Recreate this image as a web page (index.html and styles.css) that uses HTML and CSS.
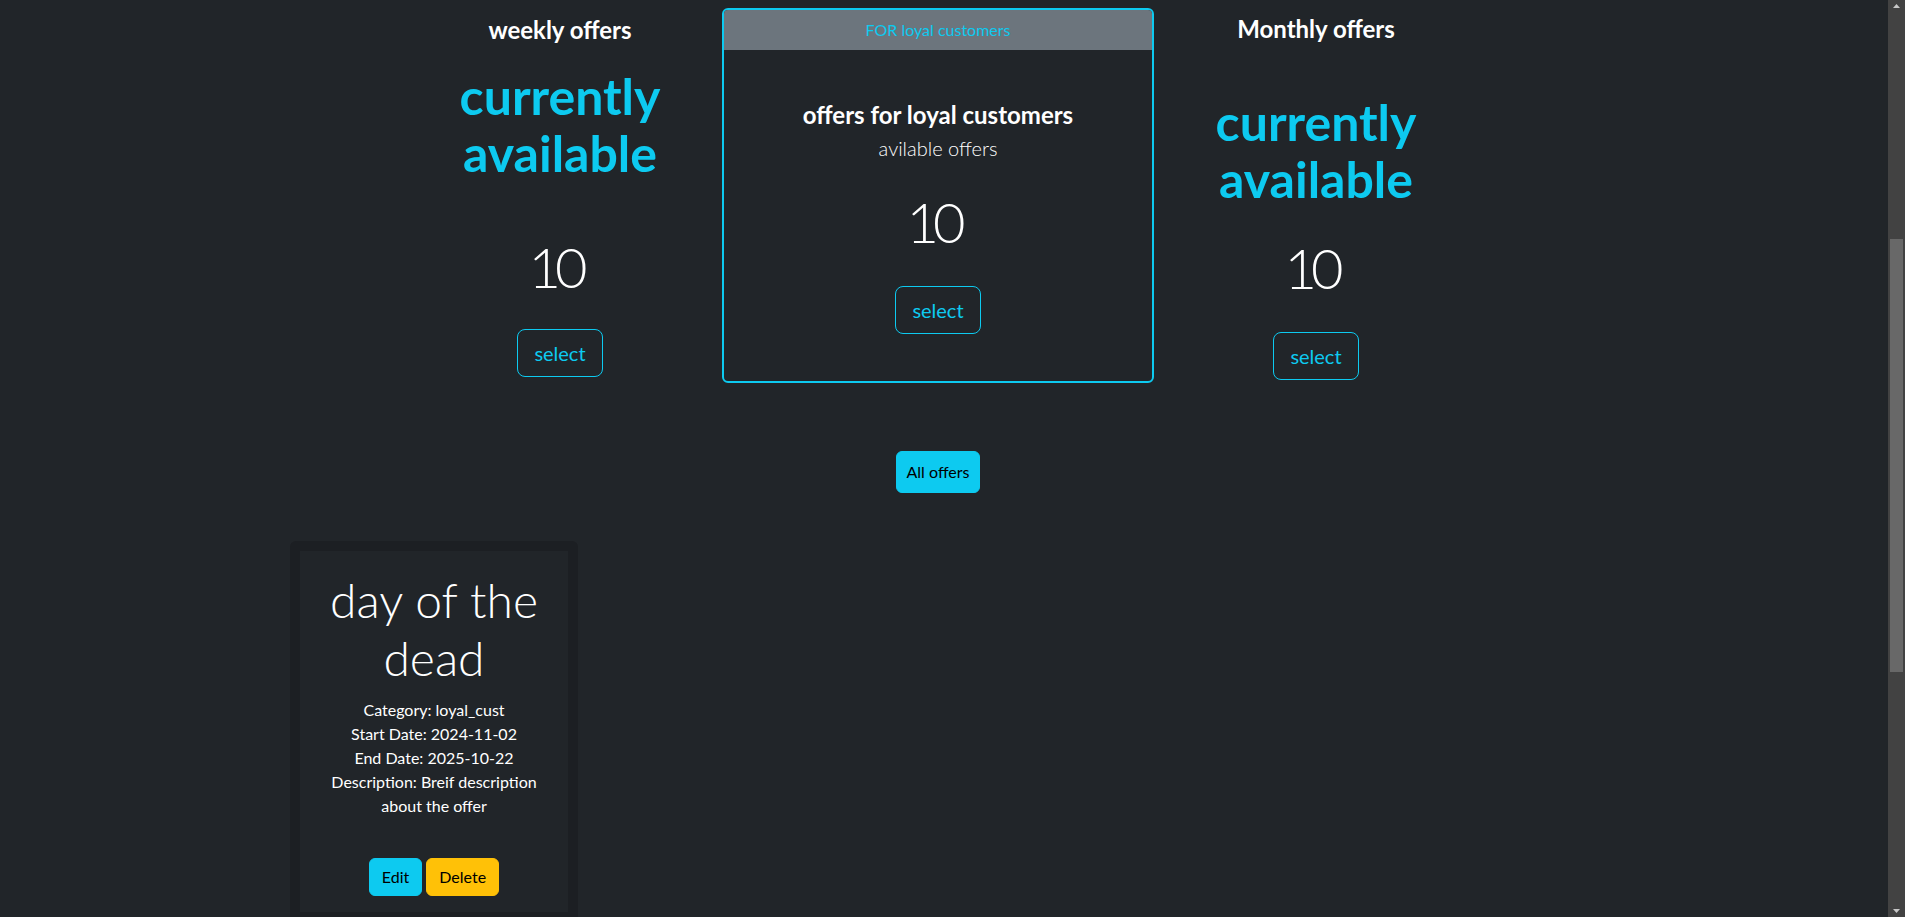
FILE: index.html
```html
<!DOCTYPE html>
<html lang="en">
<head>
<meta charset="utf-8">
<title>Offers</title>
<link rel="stylesheet" href="styles.css">
</head>
<body>
<div class="page">
  <div class="top-row">
    <div class="col col-weekly">
      <h4 class="col-title">weekly offers</h4>
      <h1 class="avail">currently<br>available</h1>
      <div class="count">10</div>
      <button class="btn-select">select</button>
    </div>
    <div class="col col-middle">
      <div class="loyal-card">
        <div class="loyal-header">FOR loyal customers</div>
        <div class="loyal-body">
          <h5 class="loyal-title">offers for loyal customers</h5>
          <p class="lead">avilable offers</p>
          <div class="count count-mid">10</div>
          <button class="btn-select btn-select-mid">select</button>
        </div>
      </div>
    </div>
    <div class="col col-monthly">
      <h4 class="col-title">Monthly offers</h4>
      <h1 class="avail">currently<br>available</h1>
      <div class="count">10</div>
      <button class="btn-select">select</button>
    </div>
  </div>

  <div class="all-wrap">
    <button class="btn-all">All offers</button>
  </div>

  <div class="offer-list">
    <div class="offer-card">
      <div class="offer-body">
        <h2 class="offer-title">day of the dead</h2>
        <div class="offer-info">
          <div>Category: loyal_cust</div>
          <div>Start Date: 2024-11-02</div>
          <div>End Date: 2025-10-22</div>
          <div>Description: Breif description about the offer</div>
        </div>
        <div class="offer-actions">
          <button class="btn-edit">Edit</button>
          <button class="btn-delete">Delete</button>
        </div>
      </div>
    </div>
  </div>
</div>

<div class="scrollbar">
  <svg class="sb-arrow sb-up" width="17" height="17" viewBox="0 0 17 17"><polygon points="5,8 12,8 8.5,4" fill="#c8c8c8"/></svg>
  <div class="sb-thumb"></div>
  <svg class="sb-arrow sb-down" width="17" height="17" viewBox="0 0 17 17"><polygon points="5,9 12,9 8.5,13" fill="#c8c8c8"/></svg>
</div>
</body>
</html>
```

FILE: styles.css
```css
* { box-sizing: border-box; }

html, body {
  margin: 0;
  padding: 0;
  background: #212529;
  height: 917px;
  overflow: hidden;
}

body {
  font-family: Lato, "Liberation Sans", sans-serif;
  color: #dee2e6;
  font-size: 16px;
  line-height: 24px;
}

.page {
  width: 1888px;
}

h1, h2, h4, h5, p { margin: 0; }

.top-row {
  display: flex;
  align-items: flex-start;
  margin-left: 371px;
}

.col {
  width: 378px;
  text-align: center;
  display: flex;
  flex-direction: column;
  align-items: center;
}

.col-title {
  font-size: 24px;
  line-height: 29px;
  font-weight: 700;
  color: #fff;
}

.col-weekly .col-title { margin-top: 15px; }
.col-monthly .col-title { margin-top: 14px; }

.avail {
  font-size: 50px;
  line-height: 57px;
  font-weight: 700;
  color: #0dcaf0;
}

.col-weekly .avail { margin-top: 24px; }
.col-monthly .avail { margin-top: 51px; }

.count {
  font-size: 56px;
  line-height: 67px;
  font-weight: 300;
  color: #fff;
  letter-spacing: -6px;
  padding-right: 10px;
}

.col-weekly .count { margin-top: 51px; }
.col-monthly .count { margin-top: 26px; }

.btn-select {
  font-family: inherit;
  font-size: 20px;
  line-height: 30px;
  padding: 8px 16px;
  border: 1px solid #0dcaf0;
  border-radius: 8px;
  background: transparent;
  color: #0dcaf0;
}

.col-weekly .btn-select { margin-top: 29px; }
.col-monthly .btn-select { margin-top: 31px; }

.loyal-card {
  margin: 8px -27px 0;
  width: 432px;
  border: 2px solid #0dcaf0;
  border-radius: 6px;
  overflow: hidden;
}

.loyal-header {
  background: #6c757d;
  color: #0dcaf0;
  font-size: 16px;
  line-height: 24px;
  padding: 8px 16px;
  font-weight: 400;
}

.loyal-body {
  display: flex;
  flex-direction: column;
  align-items: center;
  padding: 50px 16px 47px;
}

.loyal-title {
  font-size: 24px;
  line-height: 29px;
  font-weight: 700;
  color: #fff;
}

.lead {
  margin-top: 4px;
  font-size: 20px;
  line-height: 30px;
  font-weight: 300;
  color: #fff;
}

.count-mid { margin-top: 25px; }
.btn-select-mid { margin-top: 31px; }

.all-wrap {
  margin-left: 749px;
  width: 378px;
  margin-top: 68px;
  display: flex;
  justify-content: center;
}

.btn-all {
  font-family: inherit;
  font-size: 16px;
  line-height: 24px;
  padding: 8px 10px;
  border: 1px solid #0dcaf0;
  border-radius: 6px;
  background: #0dcaf0;
  color: #000;
}

.offer-list {
  margin-top: 48px;
  padding-left: 290px;
  display: flex;
}

.offer-card {
  width: 288px;
  padding: 10px;
  background: #1c1f23;
  border-radius: 6px;
}

.offer-body {
  background: #212529;
  padding: 20px 16px 16px;
  text-align: center;
  color: #fff;
}

.offer-title {
  font-size: 48px;
  line-height: 57.6px;
  font-weight: 300;
  color: #fff;
}

.offer-info {
  margin-top: 12px;
  font-size: 16px;
  line-height: 24px;
}

.offer-actions {
  margin-top: 40px;
  display: flex;
  justify-content: center;
  gap: 4px;
}

.btn-edit, .btn-delete {
  font-family: inherit;
  font-size: 16px;
  line-height: 24px;
  padding: 6px 12px;
  border-radius: 6px;
  color: #000;
}

.btn-edit {
  background: #0dcaf0;
  border: 1px solid #0dcaf0;
}

.btn-delete {
  background: #ffc107;
  border: 1px solid #ffc107;
}

.scrollbar {
  position: fixed;
  top: 0;
  right: 0;
  width: 17px;
  height: 917px;
  background: #424242;
}

.sb-arrow {
  position: absolute;
  left: 0;
  display: block;
}

.sb-up { top: 0; }
.sb-down { bottom: 0; }

.sb-thumb {
  position: absolute;
  top: 239px;
  left: 2px;
  width: 13px;
  height: 433px;
  background: #686868;
}
```
